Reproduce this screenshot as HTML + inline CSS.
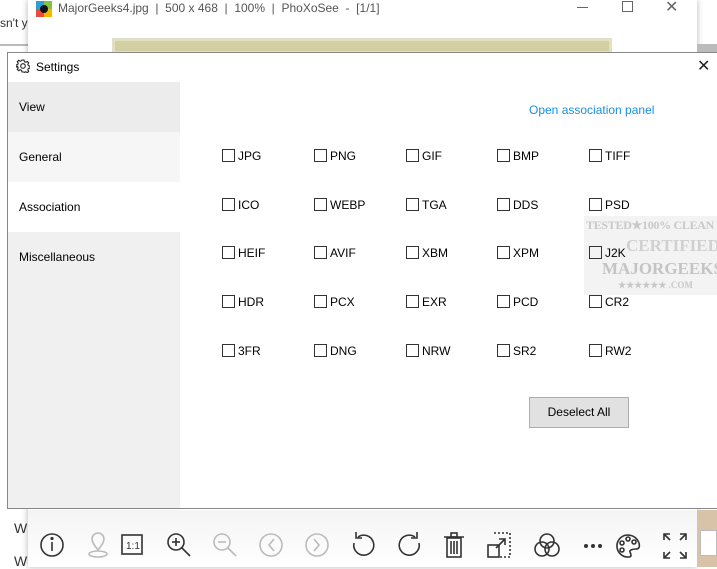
<!DOCTYPE html>
<html><head><style>
*{margin:0;padding:0;box-sizing:border-box}
body{width:717px;height:567px;overflow:hidden;background:#fff;font-family:"Liberation Sans",sans-serif;position:relative;font-size:12px;color:#000}
.abs{position:absolute;white-space:nowrap}
.cb{position:absolute;font-size:12px;line-height:14px}
.cb i{display:inline-block;width:13px;height:13px;border:1px solid #333;vertical-align:-2px;margin-right:3px;background:#fff}
.nav{position:absolute;left:8px;width:172px;height:50px;line-height:50px;padding-left:11px;font-size:12px}
</style></head><body>
<div class="abs" style="left:0;top:0;width:28px;height:567px;background:#fff"></div>
<div class="abs" style="left:0;top:16px;font-size:12px;color:#333">sn't y</div>
<div class="abs" style="left:0;top:44px;width:28px;height:2px;background:#bbb"></div>
<div class="abs" style="left:14px;top:520px;font-size:14px;color:#333">W</div>
<div class="abs" style="left:14px;top:553px;font-size:14px;color:#333">W</div>
<div class="abs" style="left:28px;top:0;width:669px;height:567px;background:#fff;box-shadow:0 0 6px rgba(0,0,0,.3)"></div>
<svg class="abs" style="left:36px;top:1px" width="16" height="16"><rect x="0" y="0" width="8" height="8" fill="#2a9fd8"/><rect x="8" y="0" width="8" height="8" fill="#86c13f"/><rect x="0" y="8" width="8" height="8" fill="#e94b3c"/><rect x="8" y="8" width="8" height="8" fill="#f5b700"/><circle cx="8" cy="8" r="4" fill="#111"/></svg>
<div class="abs" style="left:58px;top:1px;font-size:12px;color:#555">MajorGeeks4.jpg &nbsp;| &nbsp;500 x 468 &nbsp;| &nbsp;100% &nbsp;| &nbsp;PhoXoSee &nbsp;- &nbsp;[1/1]</div>
<div class="abs" style="left:577px;top:7px;width:11px;height:1px;background:#666"></div>
<div class="abs" style="left:622px;top:1px;width:11px;height:11px;border:1px solid #666"></div>
<div class="abs" style="left:665px;top:-3px;font-size:16px;color:#666">✕</div>
<div class="abs" style="left:112px;top:38px;width:500px;height:16px;background:#d3cfa2;border:3px solid #e2e0c4"></div>
<div class="abs" style="left:697px;top:44px;width:20px;height:8px;background:#bbb"></div>
<div class="abs" style="left:697px;top:510px;width:20px;height:57px;background:#d9c3a8"></div>
<div class="abs" style="left:700px;top:530px;width:17px;height:26px;background:#fff;border:1px solid #bbb"></div>
<div class="abs" style="left:28px;top:510px;width:669px;height:57px;background:linear-gradient(#f4f4f4,#fff)"></div>
<div class="abs" style="left:38px;top:532px;font-size:22px;color:#333;letter-spacing:0">
<svg width="660" height="28" style="position:absolute;left:0;top:0" fill="none" stroke-width="1.6">
<g stroke="#333"><circle cx="14" cy="13" r="11"/><line x1="14" y1="10" x2="14" y2="19"/><circle cx="14" cy="6.5" r=".8" fill="#333"/></g>
<g stroke="#bbb"><path d="M60 18c-4-5-6-8-6-11a6 6 0 0 1 12 0c0 3-2 6-6 11z"/><ellipse cx="60" cy="22" rx="9" ry="3"/></g>
<g stroke="#333"><rect x="84" y="3" width="20" height="19"/></g>
<text x="88" y="17" font-size="10" fill="#333" stroke="none" font-family="Liberation Sans">1:1</text>
<g stroke="#333"><circle cx="138" cy="10" r="8"/><line x1="144" y1="16" x2="152" y2="24"/><line x1="134" y1="10" x2="142" y2="10"/><line x1="138" y1="6" x2="138" y2="14"/></g>
<g stroke="#bbb"><circle cx="184" cy="10" r="8"/><line x1="190" y1="16" x2="198" y2="24"/><line x1="180" y1="10" x2="188" y2="10"/></g>
<g stroke="#bbb"><circle cx="233" cy="13" r="11"/><path d="M236 7l-5 6 5 6"/><circle cx="279" cy="13" r="11"/><path d="M276 7l5 6-5 6"/></g>
<g stroke="#333"><path d="M320 5a10 10 0 1 1-4 6"/><path d="M318 0v6h6"/><path d="M377 5a10 10 0 1 0 4 6"/><path d="M379 0v6h-6"/></g>
<g stroke="#333"><rect x="409" y="6" width="14" height="19"/><line x1="406" y1="5" x2="426" y2="5"/><rect x="413" y="1" width="6" height="4"/><line x1="413" y1="9" x2="413" y2="22"/><line x1="416" y1="9" x2="416" y2="22"/><line x1="419" y1="9" x2="419" y2="22"/></g>
<g stroke="#333"><rect x="450" y="13" width="11" height="12"/><path d="M456 1h16v24h-10" stroke-dasharray="2 2"/><path d="M458 16l9-9M461 7h6v6"/></g>
<g stroke="#333"><circle cx="509" cy="9" r="7"/><circle cx="504" cy="17" r="7"/><circle cx="514" cy="17" r="7"/></g>
<g fill="#333" stroke="none"><circle cx="548" cy="14" r="2"/><circle cx="555" cy="14" r="2"/><circle cx="562" cy="14" r="2"/></g>
<g stroke="#333"><path d="M589 3a11 11 0 1 0 2 22c3 0 2-3 1-5s3-3 6-3 4-2 3-6c-2-5-6-8-12-8z"/><circle cx="584" cy="11" r="2"/><circle cx="590" cy="7" r="2"/><circle cx="596" cy="10" r="2"/><circle cx="584" cy="18" r="2"/></g>
<g stroke="#333"><path d="M626 8V2h6M626 2l6 6M648 8V2h-6M648 2l-6 6M626 20v6h6M626 26l6-6M648 20v6h-6M648 26l-6-6"/></g>
</svg></div>
<div class="abs" style="left:7px;top:52px;width:710px;height:457px;background:#fff;border:1px solid #888;border-right:none"></div>
<svg class="abs" style="left:16px;top:59px" width="14" height="14" fill="none" stroke="#222" stroke-width="1.1"><circle cx="7" cy="7" r="2.3"/><path d="M6 1h2l.4 1.7 1.4.6 1.5-.9 1.4 1.4-.9 1.5.6 1.4 1.6.3v2l-1.6.4-.6 1.4.9 1.5-1.4 1.4-1.5-.9-1.4.6L8 13H6l-.4-1.6-1.4-.6-1.5.9-1.4-1.4.9-1.5-.6-1.4L0 8V6l1.6-.4.6-1.4-.9-1.5 1.4-1.4 1.5.9 1.4-.6z"/></svg>
<div class="abs" style="left:36px;top:60px;font-size:12px">Settings</div>
<div class="abs" style="left:697px;top:56px;font-size:16px;color:#222">✕</div>
<div class="abs" style="left:8px;top:82px;width:172px;height:426px;background:#f0f0f0"></div>
<div class="nav" style="top:82px;background:#ececec">View</div>
<div class="nav" style="top:132px;background:#f6f6f6">General</div>
<div class="nav" style="top:182px;background:#fff">Association</div>
<div class="nav" style="top:232px;background:#f0f0f0">Miscellaneous</div>
<div class="abs" style="left:529px;top:103px;font-size:12px;color:#1a8fd8">Open association panel</div>

<div class="abs" style="left:584px;top:216px;width:133px;height:79px;background:#f3f3f3;overflow:hidden">
<div class="abs" style="left:2px;top:2px;font:bold 12px 'Liberation Serif',serif;color:#c8c8c8;letter-spacing:-0.3px">TESTED★100% CLEAN</div>
<div class="abs" style="left:42px;top:20px;font:bold 17px 'Liberation Serif',serif;color:#d0d0d0">CERTIFIED</div>
<div class="abs" style="left:18px;top:43px;font:bold 17px 'Liberation Serif',serif;color:#c4c4c4">MAJORGEEKS</div>
<div class="abs" style="left:34px;top:64px;font:bold 9px 'Liberation Serif',serif;color:#c8c8c8">★★★★★★ .COM</div>
</div>

<div class="cb" style="left:222px;top:149px"><i></i>JPG</div><div class="cb" style="left:314px;top:149px"><i></i>PNG</div><div class="cb" style="left:406px;top:149px"><i></i>GIF</div><div class="cb" style="left:497px;top:149px"><i></i>BMP</div><div class="cb" style="left:589px;top:149px"><i></i>TIFF</div>
<div class="cb" style="left:222px;top:198px"><i></i>ICO</div><div class="cb" style="left:314px;top:198px"><i></i>WEBP</div><div class="cb" style="left:406px;top:198px"><i></i>TGA</div><div class="cb" style="left:497px;top:198px"><i></i>DDS</div><div class="cb" style="left:589px;top:198px"><i></i>PSD</div>
<div class="cb" style="left:222px;top:246px"><i></i>HEIF</div><div class="cb" style="left:314px;top:246px"><i></i>AVIF</div><div class="cb" style="left:406px;top:246px"><i></i>XBM</div><div class="cb" style="left:497px;top:246px"><i></i>XPM</div><div class="cb" style="left:589px;top:246px"><i style="background:transparent"></i>J2K</div>
<div class="cb" style="left:222px;top:295px"><i></i>HDR</div><div class="cb" style="left:314px;top:295px"><i></i>PCX</div><div class="cb" style="left:406px;top:295px"><i></i>EXR</div><div class="cb" style="left:497px;top:295px"><i></i>PCD</div><div class="cb" style="left:589px;top:295px"><i></i>CR2</div>
<div class="cb" style="left:222px;top:344px"><i></i>3FR</div><div class="cb" style="left:314px;top:344px"><i></i>DNG</div><div class="cb" style="left:406px;top:344px"><i></i>NRW</div><div class="cb" style="left:497px;top:344px"><i></i>SR2</div><div class="cb" style="left:589px;top:344px"><i></i>RW2</div>
<div class="abs" style="left:529px;top:397px;width:100px;height:31px;background:#e1e1e1;border:1px solid #adadad;text-align:center;line-height:29px;font-size:12px">Deselect All</div>
</body></html>
